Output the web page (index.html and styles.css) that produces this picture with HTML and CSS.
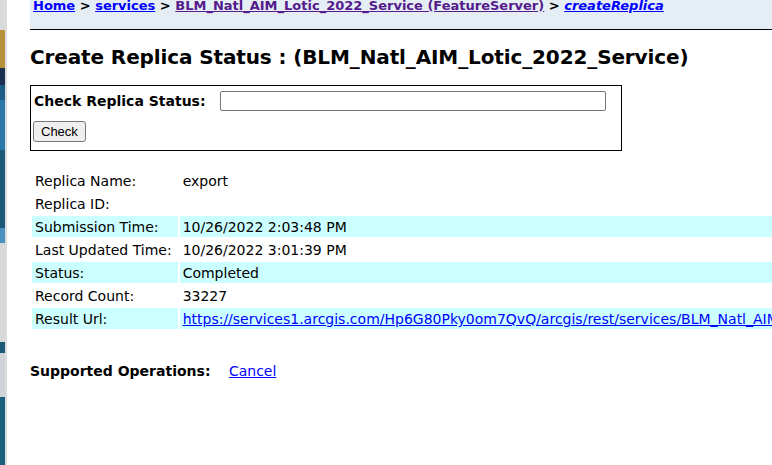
FILE: index.html
```html
<!DOCTYPE html>
<html lang="en">
<head>
  <meta charset="UTF-8" />
  <title>Create Replica Status</title>
  <link rel="stylesheet" href="styles.css">
</head>
<body>
  <div class="desk"></div>

  <div class="page">
    <div class="crumbs">
      <a href="#">Home</a> &gt;
      <a href="#">services</a> &gt;
      <a href="#" class="seen">BLM_Natl_AIM_Lotic_2022_Service (FeatureServer)</a> &gt;
      <a href="#"><i>createReplica</i></a>
    </div>

    <h2>Create Replica Status : (BLM_Natl_AIM_Lotic_2022_Service)</h2>

    <form class="check" onsubmit="return false">
      <div class="field">
        <label for="replicaId">Check Replica Status:</label>
        <input type="text" id="replicaId">
      </div>
      <button type="submit">Check</button>
    </form>

    <table class="status">
      <tr><td class="key">Replica Name:</td><td>export</td></tr>
      <tr><td class="key">Replica ID:</td><td></td></tr>
      <tr class="hl"><td class="key">Submission Time:</td><td>10/26/2022 2:03:48 PM</td></tr>
      <tr><td class="key">Last Updated Time:</td><td>10/26/2022 3:01:39 PM</td></tr>
      <tr class="hl"><td class="key">Status:</td><td>Completed</td></tr>
      <tr><td class="key">Record Count:</td><td>33227</td></tr>
      <tr class="hl"><td class="key">Result Url:</td><td><a href="#">https://services1.arcgis.com/Hp6G80Pky0om7QvQ/arcgis/rest/services/BLM_Natl_AIM_Lotic_2022_Service/FeatureServer/replicafiles/export.zip</a></td></tr>
    </table>

    <p class="ops"><b>Supported Operations:</b> <a href="#">Cancel</a></p>
  </div>
</body>
</html>
```

FILE: styles.css
```css
html, body {
  margin: 0;
  height: 100%;
  overflow: hidden;
}
body {
  display: flex;
  font-family: "DejaVu Sans", Verdana, sans-serif;
  font-size: 14px;
  color: #000;
  background: #fff;
}
a { color: #0000ff; }
a.seen { color: #551a8b; }

/* sliver of desktop behind the window */
.desk {
  width: 5px;
  flex: none;
  border-right: 2px solid #dcdcdc;
  background: linear-gradient(#dadada 0 30px, #b8903c 30px 68px, #1a3050 68px 85px,
    #1d5e86 85px 100px, #2a78a8 100px 150px, #1c5878 150px 228px, #4a90c0 228px 243px,
    #d8d8d8 243px 342px, #1c5878 342px 353px, #d0d4d8 353px 397px, #1c6080 397px);
}

.page {
  flex: 1;
  min-width: 0;
  overflow: hidden;
  padding-left: 23px;
}

.crumbs {
  height: 29px;
  padding: 0 3px;
  background: #e5eef5;
  border-bottom: 1px solid #000;
  font-size: 13px;
  font-weight: bold;
  line-height: 12px;
  white-space: nowrap;
}

h2 {
  margin: 15px 0 16px;
  font-size: 20px;
  line-height: 24px;
  letter-spacing: -0.12px;
  white-space: nowrap;
}

.check {
  width: 586px;
  padding: 5px 2px 8px;
  border: 1px solid #000;
}
.field {
  display: flex;
  align-items: center;
  gap: 14px;
  padding-left: 1px;
}
.field label { font-weight: bold; }
.field input {
  width: 386px;
  height: 20px;
  box-sizing: border-box;
  border: 1px solid #767676;
  border-radius: 2px;
}
.check button {
  margin-top: 10px;
  padding: 1px 7px;
  height: 21px;
  box-sizing: border-box;
  font-family: "Liberation Sans", Arial, sans-serif;
  font-size: 13px;
  background: #efefef;
  border: 1px solid #767676;
  border-radius: 3px;
}

.status {
  margin-top: 17px;
  border-spacing: 2px;
  white-space: nowrap;
}
.status td {
  padding: 3px 3px 1px;
  line-height: 17px;
}
.status td.key { padding-right: 6px; }
.status tr.hl td { background: #ccffff; }

.ops {
  margin: 32px 0 0;
}
.ops a { margin-left: 14px; }
```
